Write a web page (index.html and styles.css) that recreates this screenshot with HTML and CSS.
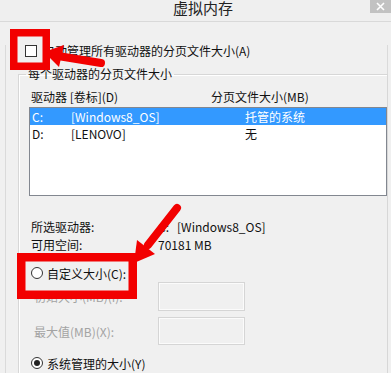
FILE: index.html
```html
<!DOCTYPE html>
<html>
<head>
    <meta charset="utf-8">
    <title>虚拟内存</title>
    <link rel="stylesheet" href="styles.css">
</head>
<body>
<div class="window">
    <div class="titlebar">
        <span class="title">虚拟内存</span>
        <span class="close">
            <svg width="9" height="9" viewBox="0 0 9 9"><path d="M1 1L8 8M8 1L1 8" stroke="#fff" stroke-width="1.6"/></svg>
        </span>
    </div>
    <div class="frame">
        <label class="check-row"><span class="checkbox"></span>自动管理所有驱动器的分页文件大小(A)</label>
        <fieldset class="group">
            <legend>每个驱动器的分页文件大小</legend>
            <div class="list-head">
                <span>驱动器 [卷标](D)</span>
                <span>分页文件大小(MB)</span>
            </div>
            <div class="listbox">
                <div class="row selected"><span>C:</span><span>[Windows8_OS]</span><span>托管的系统</span></div>
                <div class="row"><span>D:</span><span>[LENOVO]</span><span>无</span></div>
            </div>
            <div class="info">
                <span>所选驱动器:</span><span>C:&nbsp;&nbsp;&nbsp;[Windows8_OS]</span>
                <span>可用空间:</span><span>70181 MB</span>
            </div>
            <div class="radio-row"><span class="radio"></span>自定义大小(C):</div>
            <div class="size-row"><span>初始大小(MB)(I):</span><span class="textbox"></span></div>
            <div class="size-row second"><span>最大值(MB)(X):</span><span class="textbox"></span></div>
            <div class="radio-row last"><span class="radio on"></span>系统管理的大小(Y)</div>
        </fieldset>
    </div>

    <!-- red marks drawn over the dialog -->
    <svg class="marks" width="391" height="373" viewBox="0 0 391 373">
        <g fill="none" stroke="#f20000">
            <rect x="13.75" y="32.75" width="32.5" height="33.5" stroke-width="7.5"/>
            <rect x="21.25" y="257.25" width="111.5" height="37.5" stroke-width="8.5"/>
        </g>
        <g stroke="#f20000" stroke-width="8" stroke-linecap="round">
            <line x1="101" y1="63" x2="58" y2="56"/>
            <line x1="177" y1="208" x2="148" y2="245"/>
        </g>
        <g fill="#f20000">
            <polygon points="44,52 64,45 59,67"/>
            <polygon points="134,263 137,240 155,254"/>
        </g>
    </svg>
</div>
</body>
</html>
```

FILE: styles.css
```css
body {
    margin: 0;
    background: #f0f0f0;
}
.window {
    position: relative;
    width: 391px;
    height: 373px;
    overflow: hidden;
    background: #f0f0f0;
    font-family: "Noto Sans CJK SC", "Microsoft YaHei", sans-serif;
    font-size: 12px;
    color: #111;
}
.titlebar {
    display: flex;
    height: 22px;
    box-sizing: border-box;
    border-bottom: 1px solid #d9d9d9;
    background: #efefef;
    padding-left: 36px;
}
.title {
    flex: 1;
    text-align: center;
    font-size: 15px;
    line-height: 15px;
    color: #222;
}
.close {
    width: 21px;
    height: 13px;
    background: #c2c2c2;
    display: flex;
    align-items: center;
    justify-content: center;
}
.frame {
    margin-left: 5px;
    width: 381px;
    height: 351px;
    border-left: 1px solid #dadada;
    border-right: 1px solid #dadada;
}
.check-row {
    display: flex;
    align-items: center;
    gap: 6px;
    margin-top: 23px;
    margin-left: 19px;
    height: 12px;
    line-height: 12px;
}
.checkbox {
    width: 10px;
    height: 10px;
    border: 1px solid #333;
    background: #fff;
}
.group {
    margin: 10px 0 0 12px;
    padding: 0;
    width: 364px;
    height: 400px;
    border: 1px solid #d7d7d7;
    box-shadow: inset 1px 1px 0 #fff;
}
.group legend {
    margin-left: 7px;
    padding: 0 2px;
    line-height: 14px;
}
.list-head {
    display: grid;
    grid-template-columns: 180px auto;
    margin: 9px 0 0 12px;
    line-height: 14px;
}
.listbox {
    margin: 3px 0 0 10px;
    width: 358px;
    height: 89px;
    box-sizing: border-box;
    border: 1px solid #828790;
    background: #fff;
}
.row {
    display: grid;
    grid-template-columns: 39px 174px auto;
    padding-left: 2px;
    height: 17px;
    line-height: 17px;
}
.row.selected {
    background: #3399ff;
    color: #fff;
}
.info {
    display: grid;
    grid-template-columns: 127px auto;
    margin: 22px 0 0 12px;
    line-height: 18px;
}
.radio-row {
    display: flex;
    align-items: center;
    gap: 4px;
    margin: 10px 0 0 12px;
    height: 18px;
}
.radio-row.last {
    margin-top: 9px;
}
.radio {
    width: 10px;
    height: 10px;
    border: 1px solid #333;
    border-radius: 50%;
    background: #fff;
    display: flex;
    align-items: center;
    justify-content: center;
}
.radio.on::after {
    content: "";
    width: 6px;
    height: 6px;
    border-radius: 50%;
    background: #222;
}
.size-row {
    display: grid;
    grid-template-columns: 124px 87px;
    align-items: center;
    margin-left: 15px;
    color: #a3a3a3;
}
.size-row .textbox {
    height: 29px;
    box-sizing: border-box;
    border: 1px solid #d5d5d5;
    box-shadow: inset 0 0 0 1px #fbfbfb;
}
.size-row.second {
    margin-top: 6px;
}
.size-row.second .textbox {
    height: 28px;
}
.marks {
    position: absolute;
    left: 0;
    top: 0;
}
```
